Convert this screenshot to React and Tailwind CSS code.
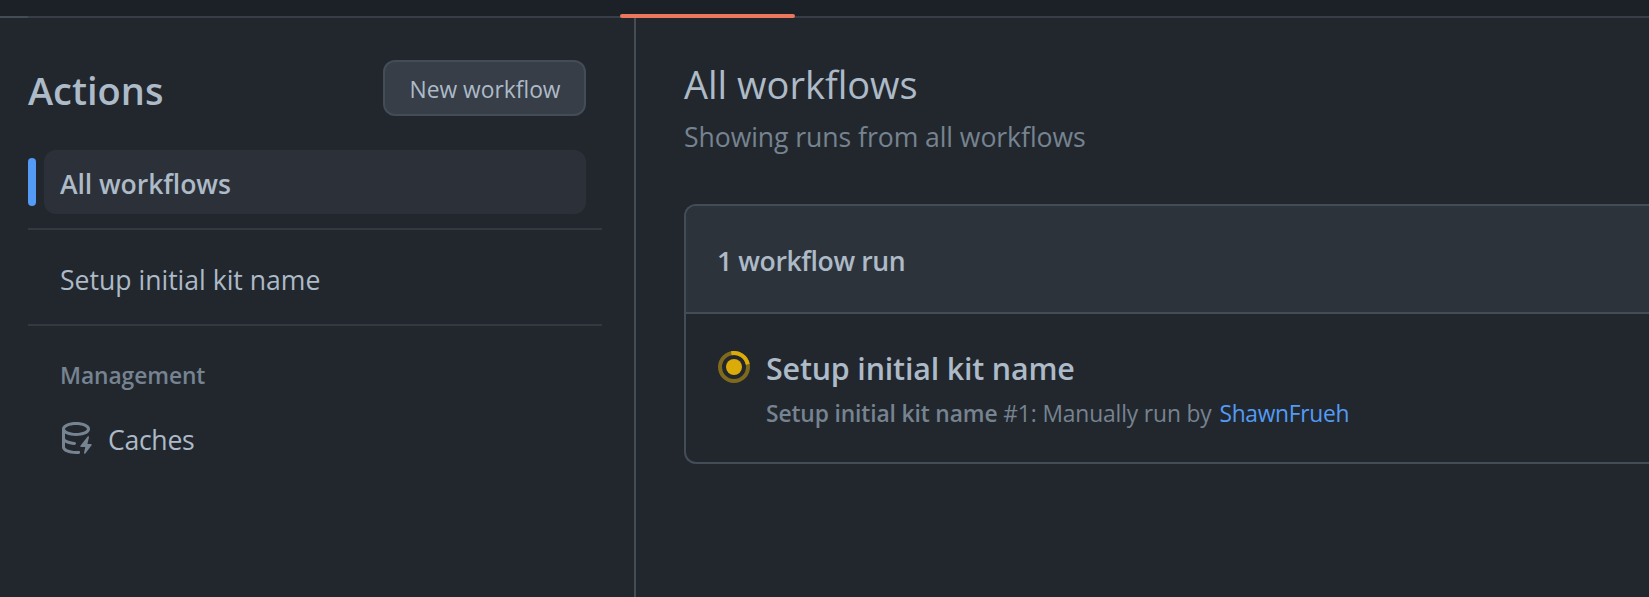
import React from "react";

function CacheIcon() {
  return (
    <svg viewBox="0 0 16 16" className="size-8 shrink-0 fill-[#768390]" aria-hidden="true">
      <path d="M2.5 5.724V8c0 .248.238.7 1.169 1.159.874.43 2.144.745 3.62.822a.75.75 0 1 1-.078 1.498c-1.622-.085-3.102-.432-4.204-.975a5.565 5.565 0 0 1-.507-.28V12.5c0 .133.058.318.282.551.227.237.591.483 1.101.707 1.015.447 2.47.742 4.117.742.406 0 .802-.018 1.183-.052a.751.751 0 1 1 .134 1.494C8.89 15.98 8.45 16 8 16c-1.805 0-3.475-.32-4.721-.869-.623-.274-1.173-.619-1.579-1.041-.408-.425-.7-.964-.7-1.59v-9c0-.626.292-1.165.7-1.591.406-.42.956-.766 1.579-1.04C4.525.32 6.195 0 8 0c1.806 0 3.476.32 4.721.869.623.274 1.173.619 1.579 1.041.408.425.7.964.7 1.59 0 .626-.292 1.165-.7 1.591-.406.42-.956.766-1.578 1.04C11.475 6.68 9.805 7 8 7c-1.805 0-3.475-.32-4.721-.869a6.15 6.15 0 0 1-.779-.407Zm0-2.224c0 .133.058.318.282.551.227.237.591.483 1.101.707C4.898 5.205 6.353 5.5 8 5.5c1.646 0 3.101-.295 4.118-.742.508-.224.873-.471 1.1-.708.224-.232.282-.417.282-.55 0-.133-.058-.318-.282-.551-.227-.237-.591-.483-1.101-.707C11.102 1.795 9.647 1.5 8 1.5c-1.646 0-3.101.295-4.118.742-.508.224-.873.471-1.1.708-.224.232-.282.417-.282.55Z" />
      <path d="M14.49 7.582a.375.375 0 0 0-.66-.313l-3.625 4.625a.375.375 0 0 0 .295.606h2.127l-.619 2.922a.375.375 0 0 0 .666.304l3.125-4.125A.375.375 0 0 0 15.5 11h-1.778l.769-3.418Z" />
    </svg>
  );
}

function RunningIcon() {
  return (
    <svg viewBox="0 0 16 16" className="size-8 shrink-0" aria-hidden="true">
      <circle cx="8" cy="8" r="7" fill="none" stroke="#dbab0a" strokeOpacity="0.5" strokeWidth="2" />
      <circle cx="8" cy="8" r="4" fill="#dbab0a" />
      <path d="M8 1a7 7 0 0 1 7 7" transform="rotate(-11 8 8)" fill="none" stroke="#dbab0a" strokeWidth="2" />
    </svg>
  );
}

function Sidebar() {
  return (
    <aside className="w-[636px] shrink-0 border-r-2 border-[#444c56] pt-[42px] pl-7">
      <div className="mr-12 flex h-14 items-center justify-between">
        <h1 className="pt-[3px] text-[38px] leading-[50px] font-semibold">Actions</h1>
        <button className="flex h-14 w-[203px] items-center justify-center rounded-xl border-2 border-[#444c56] bg-[#373e47] pt-[4px] pl-px text-[22.8px] leading-8 whitespace-nowrap">
          New workflow
        </button>
      </div>

      <nav className="mr-8 pt-[34px]">
        <div className="mr-4 flex h-16 items-center gap-2">
          <span className="h-12 w-2 rounded-full bg-[#539bf5]" />
          <a className="flex h-16 grow items-center rounded-xl bg-[#2c3038] pt-[3px] pl-4 text-[26.6px] leading-9 font-semibold tracking-[-0.08px]">
            All workflows
          </a>
        </div>
        <hr className="mt-3.5 border-t-2 border-[#323942]" />
        <a className="mt-4 flex h-16 items-center pt-[3px] pl-8 text-[26.6px] leading-9 tracking-[-0.01px]">
          Setup initial kit name
        </a>
        <hr className="mt-3.5 border-t-2 border-[#323942]" />
        <h2 className="mt-[34px] pl-8 text-[22.8px] leading-8 font-semibold tracking-[-0.08px] text-[#768390]">
          Management
        </h2>
        <a className="mt-[14px] flex h-16 items-center gap-4 pl-8">
          <CacheIcon />
          <span className="pt-[3px] text-[26.6px] leading-9 tracking-[-0.3px]">Caches</span>
        </a>
      </nav>
    </aside>
  );
}

function WorkflowRuns() {
  return (
    <main className="min-w-0 grow pt-[41px] pl-12">
      <h2 className="text-[38px] leading-[50px]">All workflows</h2>
      <p className="mt-[10px] text-[26.6px] leading-9 tracking-[-0.07px] text-[#768390]">
        Showing runs from all workflows
      </p>

      <section className="mt-[49px] h-[260px] rounded-l-xl border-2 border-r-0 border-[#444c56]">
        <header className="flex h-[108px] items-center rounded-tl-[10px] border-b-2 border-[#444c56] bg-[#2d333b] pt-[3px] pl-[31px]">
          <strong className="text-[26.6px] leading-9 font-semibold tracking-[-0.4px]">1 workflow run</strong>
        </header>
        <div className="flex gap-4 pt-[34px] pl-8">
          <div className="pt-[3px]">
            <RunningIcon />
          </div>
          <div>
            <h3 className="text-[30.4px] leading-[42px] font-semibold tracking-[-0.17px]">Setup initial kit name</h3>
            <p className="mt-2 text-[22.8px] leading-8 tracking-[-0.13px] text-[#768390]">
              <span className="font-semibold">Setup initial kit name</span> #1: Manually run by{" "}
              <a className="ml-[2px] tracking-[-0.3px] text-[#539bf5]">ShawnFrueh</a>
            </p>
          </div>
        </div>
      </section>
    </main>
  );
}

export default function App() {
  return (
    <div className="flex h-[597px] w-[1649px] flex-col overflow-hidden bg-[#22272e] font-['Open_Sans',sans-serif] text-[#adbac7]">
      <div className="relative flex h-[18px] shrink-0 items-end bg-[#1c2128]">
        <div className="h-[2px] w-7 bg-[#444c56]" />
        <div className="h-[2px] grow bg-[#373e47]" />
        <div className="absolute top-[14px] left-[620px] h-1 w-[175px] rounded-[2px] bg-[#ec775c]" />
      </div>
      <div className="flex min-h-0 grow">
        <Sidebar />
        <WorkflowRuns />
      </div>
    </div>
  );
}
